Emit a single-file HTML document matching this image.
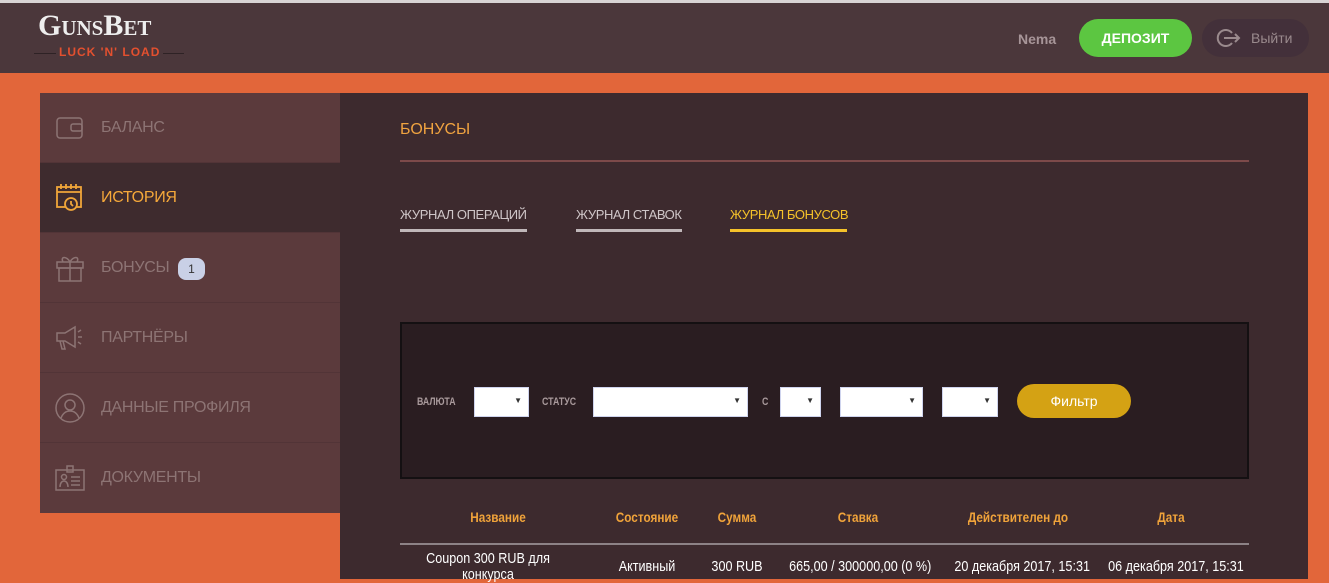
<!DOCTYPE html>
<html><head><meta charset="utf-8"><style>
*{margin:0;padding:0;box-sizing:border-box}
body{width:1329px;height:579px;overflow:hidden;background:#e2663a;font-family:"Liberation Sans",sans-serif;position:relative}
.a{position:absolute}
.hdr{left:0;top:0;width:1329px;height:73px;background:#4b373b;border-top:3px solid #d8d4d4}
.side{left:40px;top:93px;width:300px;height:420px;background:#5b3a3c}
.item{position:absolute;left:0;width:300px;height:70px;border-bottom:1px solid #523437}
.item span{position:absolute;left:61px;top:26px;font-size:16px;color:#8d7474;letter-spacing:-.3px}
.item svg{position:absolute;left:14px;top:19px}
.main{left:340px;top:93px;width:968px;height:486px;background:#3d2a2e}
.n{transform:scaleX(.84);transform-origin:center}
.th{top:509px;font-size:14px;font-weight:bold;color:#f0a33a;text-align:center}
.td{top:558px;font-size:15px;color:#fff;text-align:center;white-space:nowrap}
.sel{top:387px;height:30px;background:#fff;border:1px solid #cfd4ee}
.sel:after{content:"▼";position:absolute;right:6px;top:8px;font-size:8px;color:#333}
.lab{top:396px;font-size:11px;font-weight:bold;color:#a99a9c;transform:scaleX(.8);transform-origin:left}
</style></head><body>
<div class="a hdr"></div>
<div class="a" style="left:38px;top:9px;font-family:'Liberation Serif',serif;font-weight:bold;font-size:30px;color:#eee;letter-spacing:0px;font-variant:small-caps">GunsBet</div>
<div class="a" style="left:34px;top:53px;width:150px;height:1px;background:#2e2225"></div>
<div class="a" style="left:56px;top:45px;background:#4b373b;padding:0 3px;font-size:12px;font-weight:bold;color:#e3502f;letter-spacing:1px">LUCK 'N' LOAD</div>
<div class="a" style="left:1018px;top:31px;font-size:14px;font-weight:bold;color:#a79598">Nema</div>
<div class="a" style="left:1079px;top:19px;width:113px;height:38px;border-radius:19px;background:#5cc641;color:#fff;font-weight:bold;font-size:14px;text-align:center;line-height:38px">ДЕПОЗИТ</div>
<div class="a" style="left:1202px;top:19px;width:107px;height:38px;border-radius:19px;background:#43303a;color:#9a8a8d;font-size:14px;line-height:38px;padding-left:49px">Выйти</div>
<svg class="a" style="left:1216px;top:28px" width="26" height="20" viewBox="0 0 26 20" fill="none" stroke="#9a8a8d" stroke-width="2"><path d="M16 5A8 8 0 1 0 16 15"/><path d="M8 10H23M19 6l4 4-4 4"/></svg>

<div class="a side">
 <div class="item" style="top:0"><svg width="32" height="32" viewBox="0 0 32 32" fill="none" stroke="#8d7474" stroke-width="1.5"><rect x="3" y="6" width="25" height="20" rx="3"/><rect x="17" y="12" width="11" height="7" rx="2"/></svg><span>БАЛАНС</span></div>
 <div class="item" style="top:70px;background:#3e2b2e"><svg width="32" height="32" viewBox="0 0 32 32" fill="none" stroke="#f0a63a" stroke-width="1.8"><rect x="3" y="5" width="24" height="20"/><path d="M3 10H27M7 2v5M12 2v5M17 2v5M22 2v5"/><circle cx="17" cy="22" r="6" fill="#3e2b2e"/><path d="M17 19v3l2 2"/></svg><span style="color:#f5a83a">ИСТОРИЯ</span></div>
 <div class="item" style="top:140px"><svg width="32" height="32" viewBox="0 0 32 32" fill="none" stroke="#8d7474" stroke-width="1.5"><rect x="3" y="10" width="26" height="6"/><rect x="5" y="16" width="22" height="13"/><path d="M16 10V29M16 10c-3-6-10-6-7 0M16 10c3-6 10-6 7 0"/></svg><span>БОНУСЫ</span><div style="position:absolute;left:138px;top:25px;width:27px;height:22px;border-radius:8px;background:#c9d0e6;color:#333;font-size:12px;text-align:center;line-height:22px">1</div></div>
 <div class="item" style="top:210px"><svg width="32" height="32" viewBox="0 0 32 32" fill="none" stroke="#8d7474" stroke-width="1.5"><path d="M3 11h8l10-6v20l-10-6H3z M6 19l2 8h3l-2-8M24 10l3-2M24 15h4M24 20l3 2"/></svg><span>ПАРТНЁРЫ</span></div>
 <div class="item" style="top:280px"><svg width="32" height="32" viewBox="0 0 32 32" fill="none" stroke="#8d7474" stroke-width="1.5"><circle cx="16" cy="16" r="14"/><circle cx="16" cy="13" r="5"/><path d="M7 26c2-5 5-7 9-7s7 2 9 7"/></svg><span>ДАННЫЕ ПРОФИЛЯ</span></div>
 <div class="item" style="top:350px;border:0"><svg width="32" height="32" viewBox="0 0 32 32" fill="none" stroke="#8d7474" stroke-width="1.5"><rect x="2" y="8" width="28" height="20"/><path d="M13 4h6v6h-6z M6 25c0-4 2-6 4-6s4 2 4 6M17 15h9M17 19h9M17 23h9"/><circle cx="10" cy="15" r="2.5"/></svg><span>ДОКУМЕНТЫ</span></div>
</div>

<div class="a main"></div>
<div class="a" style="left:400px;top:121px;font-size:16px;color:#f0a340">БОНУСЫ</div>
<div class="a" style="left:400px;top:160px;width:849px;height:2px;background:#7d4a4a"></div>
<div class="a" style="left:400px;top:207px;font-size:13px;color:#cfc6c8;letter-spacing:-.4px">ЖУРНАЛ ОПЕРАЦИЙ</div>
<div class="a" style="left:400px;top:229px;width:127px;height:3px;background:#c0b7b9"></div>
<div class="a" style="left:576px;top:207px;font-size:13px;color:#cfc6c8;letter-spacing:-.4px">ЖУРНАЛ СТАВОК</div>
<div class="a" style="left:576px;top:229px;width:106px;height:3px;background:#c0b7b9"></div>
<div class="a" style="left:730px;top:207px;font-size:13px;color:#f5c22a;letter-spacing:-.4px">ЖУРНАЛ БОНУСОВ</div>
<div class="a" style="left:730px;top:229px;width:117px;height:3px;background:#f5c22a"></div>

<div class="a" style="left:400px;top:322px;width:849px;height:157px;background:#2a1d21;border:2px solid #141012"></div>
<div class="a lab" style="left:417px">ВАЛЮТА</div>
<div class="a sel" style="left:474px;width:55px"></div>
<div class="a lab" style="left:542px">СТАТУС</div>
<div class="a sel" style="left:593px;width:155px"></div>
<div class="a lab" style="left:762px">С</div>
<div class="a sel" style="left:780px;width:41px"></div>
<div class="a sel" style="left:840px;width:83px"></div>
<div class="a sel" style="left:942px;width:56px"></div>
<div class="a" style="left:1017px;top:384px;width:114px;height:34px;border-radius:17px;background:#d4a214;color:#fff;font-size:14px;text-align:center;line-height:34px">Фильтр</div>

<div class="a th n" style="left:440px;width:116px">Название</div>
<div class="a th n" style="left:600px;width:94px">Состояние</div>
<div class="a th n" style="left:704px;width:66px">Сумма</div>
<div class="a th n" style="left:800px;width:116px">Ставка</div>
<div class="a th n" style="left:940px;width:156px">Действителен до</div>
<div class="a th n" style="left:1120px;width:102px">Дата</div>
<div class="a" style="left:400px;top:543px;width:849px;height:2px;background:#8d8286"></div>
<div class="a td n" style="left:410px;width:156px;top:551px;line-height:16px">Coupon 300 RUB для<br>конкурса</div>
<div class="a td n" style="left:600px;width:94px">Активный</div>
<div class="a td n" style="left:704px;width:66px">300 RUB</div>
<div class="a td n" style="left:776px;width:164px">665,00 / 300000,00 (0 %)</div>
<div class="a td n" style="left:942px;width:154px">20 декабря 2017, 15:31</div>
<div class="a td n" style="left:1096px;width:152px">06 декабря 2017, 15:31</div>
</body></html>
